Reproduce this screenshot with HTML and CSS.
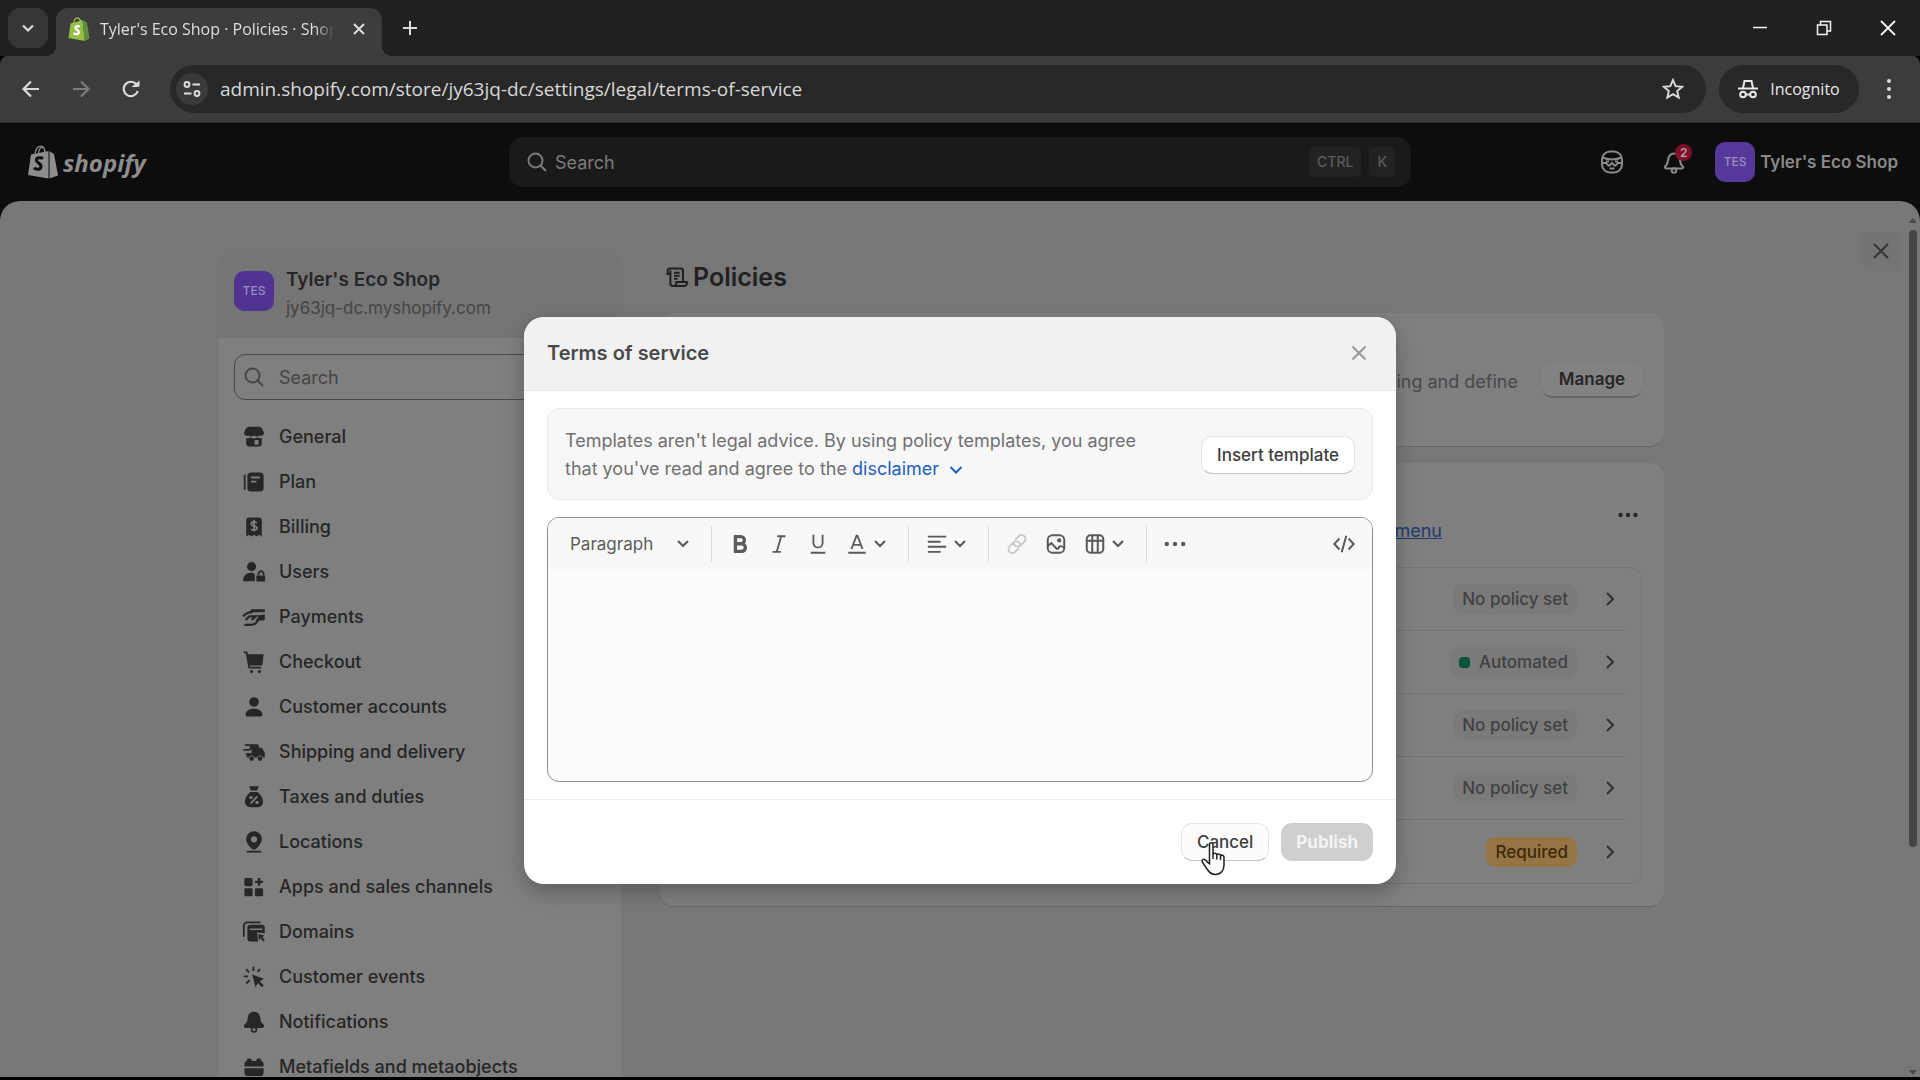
FILE: index.html
```html
<!DOCTYPE html>
<html lang="en">
<head>
<meta charset="utf-8">
<meta name="viewport" content="width=device-width, initial-scale=1">
<title>Tyler's Eco Shop · Policies · Shopify</title>
<link rel="stylesheet" href="styles.css">
</head>
<body>
<div class="browser">
  <div class="tabstrip">
    <button class="tab-search" aria-label="Search tabs"><svg width="14" height="14" viewBox="0 0 14 14" fill="none" stroke="currentColor" stroke-width="2.2"><path d="M2 4.5l5 5 5-5"/></svg></button>
    <div class="tab">
      <svg width="22" height="24" viewBox="0 0 22 24"><path d="M2.500 6.500L14.500 3l2.500 21L0.500 21z" fill="#95bf47"/><path d="M14.500 3l4.500 2.500 2.500 16L16.500 24z" fill="#5e8e3e"/><path d="M5.500 6.500c.5-3.500 2-5.500 4-5.500 1.700 0 2.700 1.500 3 4" fill="none" stroke="#95bf47" stroke-width="1.300"/><path d="M11.800 9.700c-1.500-.9-4.400-1-4.400 1.100 0 2 3.800 2.100 3.400 4.700-.3 2.200-3.300 2.100-5.200.7" fill="none" stroke="#fff" stroke-width="2.300"/></svg>
      <span class="tab-title">Tyler's Eco Shop · Policies · Shopify</span>
      <button class="tab-close" aria-label="Close tab"><svg width="14" height="14" viewBox="0 0 14 14" fill="none" stroke="currentColor" stroke-width="2"><path d="M2 2l10 10M12 2L2 12"/></svg></button>
    </div>
    <button class="tab-new" aria-label="New tab"><svg width="16" height="16" viewBox="0 0 16 16" fill="none" stroke="currentColor" stroke-width="2"><path d="M8 1v14M1 8h14"/></svg></button>
    <div class="window-controls">
      <button aria-label="Minimize"><svg width="16" height="16" viewBox="0 0 16 16" fill="none" stroke="currentColor" stroke-width="1.500"><path d="M1 7.500h14"/></svg></button>
      <button aria-label="Restore"><svg width="16" height="16" viewBox="0 0 16 16" fill="none" stroke="currentColor" stroke-width="1.500"><path d="M1.500 5h9.500v9.500H1.500zM4.500 5V1.500h10V11H11"/></svg></button>
      <button aria-label="Close window"><svg width="16" height="16" viewBox="0 0 16 16" fill="none" stroke="currentColor" stroke-width="1.800"><path d="M1 1l14 14M15 1L1 15"/></svg></button>
    </div>
  </div>

  <div class="toolbar">
    <button class="nav-btn" aria-label="Back"><svg width="20" height="20" viewBox="0 0 20 20" fill="none" stroke="currentColor" stroke-width="2.200"><path d="M18 10H3M10 2.500L2.500 10l7.500 7.500"/></svg></button>
    <button class="nav-btn dim" aria-label="Forward"><svg width="20" height="20" viewBox="0 0 20 20" fill="none" stroke="currentColor" stroke-width="2.200"><path d="M2 10h15M10 2.500l7.500 7.500-7.500 7.500"/></svg></button>
    <button class="nav-btn" aria-label="Reload"><svg width="20" height="20" viewBox="0 0 20 20" fill="none" stroke="currentColor" stroke-width="2.200"><path d="M16.800 12a7.200 7.200 0 1 1-1.500-6.800"/><path d="M10.500 8h5.500l2.500-.5V1.500z" fill="currentColor" stroke="none"/></svg></button>
    <div class="address">
      <button class="site-info" aria-label="View site information"><svg width="20" height="20" viewBox="0 0 20 20" fill="none" stroke="currentColor" stroke-width="2"><circle cx="5" cy="5.500" r="2.400"/><path d="M10.500 5.500H18M2 14.500h7.500"/><circle cx="15" cy="14.500" r="2.400"/></svg></button>
      <input class="url" type="text" aria-label="Address" value="admin.shopify.com/store/jy63jq-dc/settings/legal/terms-of-service">
      <button class="star" aria-label="Bookmark this page"><svg width="22" height="22" viewBox="0 0 22 22" fill="none" stroke="currentColor" stroke-width="1.900"><path d="M11 2l2.600 6.100 6.600.6-5 4.400 1.500 6.500L11 16.200l-5.700 3.400 1.500-6.500-5-4.400 6.600-.6z"/></svg></button>
    </div>
    <button class="incognito"><svg width="20" height="20" viewBox="0 0 20 20" fill="none" stroke="currentColor" stroke-width="2"><path d="M0 9.500h20"/><path d="M5 9l1.500-7h7L15 9"/><circle cx="5" cy="15.500" r="2.800"/><circle cx="15" cy="15.500" r="2.800"/><path d="M7.800 15.500h4.400"/></svg>Incognito</button>
    <button class="kebab" aria-label="Browser menu"><svg width="6" height="22" viewBox="0 0 6 22" fill="currentColor"><circle cx="3" cy="3" r="2"/><circle cx="3" cy="11" r="2"/><circle cx="3" cy="19" r="2"/></svg></button>
  </div>

  <div class="page">
    <header class="topbar">
      <a class="logo" href="#"><svg width="30" height="34" viewBox="0 0 30 34"><path d="M3 9.500L20.500 6v27.500L0 30z" fill="currentColor"/><path d="M21.500 6.200L26 9l4 21.500-8.500 3z" fill="currentColor"/><path d="M7 9c.8-5 3-7.800 5.800-7.800 2.700 0 4 2.500 4.200 6.500M10.500 8C11 3.500 13 1.200 15.500 3" fill="none" stroke="currentColor" stroke-width="1.300"/><path d="M15 13.500c-2-1.300-6.600-1.200-6.600 1.700 0 3 5.200 3 4.600 6.800-.5 3.200-4.800 2.700-7 .9" fill="none" stroke="#0d0d0d" stroke-width="3"/></svg><span>shopify</span></a>
      <label class="top-search">
        <svg width="20" height="20" viewBox="0 0 20 20" fill="none" stroke="currentColor" stroke-width="1.900"><circle cx="8.500" cy="8.500" r="7"/><path d="M13.500 13.500L19 19"/></svg>
        <input type="search" placeholder="Search" aria-label="Search">
        <kbd>CTRL</kbd><kbd>K</kbd>
      </label>
      <div class="top-actions">
        <button class="top-icon" aria-label="Assistant"><svg width="24" height="24" viewBox="0 0 24 24" fill="none" stroke="currentColor" stroke-width="2"><rect x="2" y="1.500" width="20" height="21" rx="8"/><path d="M2.500 7.500c5 2.500 14 2.500 19 0M2 13h4l2.500 2.500h1L12 13l2.500 2.500h1L18 13h4M6 11.500h3M15 11.500h3M9.500 18.500h5"/></svg></button>
        <button class="top-icon" aria-label="Notifications"><svg width="24" height="24" viewBox="0 0 24 24" fill="none" stroke="currentColor" stroke-width="2"><path d="M3 16.500c1.500-1 2.500-3 3-6 .5-4.500 2.500-7 6-7s5.500 2.500 6 7c.5 3 1.500 5 3 6 .5 1.500-.5 2-1.500 2h-15c-1 0-2-.5-1.500-2z"/><circle cx="12" cy="20.500" r="2.300"/></svg><span class="count">2</span></button>
        <button class="account"><span class="avatar">TES</span>Tyler's Eco Shop</button>
      </div>
    </header>

    <main class="panel">
      <button class="panel-close" aria-label="Close settings"><svg width="16" height="16" viewBox="0 0 16 16" fill="none" stroke="currentColor" stroke-width="2"><path d="M1 1l14 14M15 1L1 15"/></svg></button>
      <div class="scrollbar"><i class="up"></i><i class="thumb"></i><i class="down"></i></div>
      <div class="columns">
        <aside class="sidebar">
          <div class="shop">
            <span class="avatar">TES</span>
            <div><div class="shop-name">Tyler's Eco Shop</div><div class="shop-domain">jy63jq-dc.myshopify.com</div></div>
          </div>
          <div class="menu">
            <label class="side-search"><svg width="20" height="20" viewBox="0 0 20 20" fill="none" stroke="currentColor" stroke-width="1.900"><circle cx="8.500" cy="8.500" r="7"/><path d="M13.500 13.500L19 19"/></svg><input type="search" placeholder="Search" aria-label="Search settings"></label>
            <nav class="side-nav">
              <a href="#"><svg viewBox="0 0 20 20"><path d="M6 1.500h8c2 0 3.500 2.500 4.200 4.800.6 2-1.700 3.500-3.400 2.400-1.400 1.200-3.300 1.200-4.800 0-1.500 1.200-3.400 1.200-4.800 0C3.500 9.800 1.200 8.300 1.800 6.300 2.500 4 4 1.500 6 1.500z"/><path fill-rule="evenodd" d="M3.500 10.800c1 .3 2.200.2 3.500-.3 2 .9 4 .9 6 0 1.300.5 2.500.6 3.500.3V15a3 3 0 0 1-3 3h-7a3 3 0 0 1-3-3zm7 1.800v3.800h3.300v-3.800z"/></svg>General</a>
              <a href="#"><svg viewBox="0 0 20 20"><path d="M1.500 4H3v12.500H1.500z"/><path fill-rule="evenodd" d="M7.500 2h7.500a3 3 0 0 1 3 3v10a3 3 0 0 1-3 3H7.500a3 3 0 0 1-3-3V5a3 3 0 0 1 3-3zM7.500 5.500V7H15V5.500zM7.500 9v1.500H12V9z"/></svg>Plan</a>
              <a href="#"><svg viewBox="0 0 20 20"><path fill-rule="evenodd" d="M6 2h8a2.500 2.500 0 0 1 2.500 2.500V18l-2.200-1.500L12.200 18 10 16.500 7.800 18l-2.100-1.500L3.500 18V4.500A2.500 2.500 0 0 1 6 2z"/><path d="M12.300 6.500c-1.500-1.300-4.600-1-4.600.9 0 2.200 4.800 1.200 4.800 3.500 0 2-3.400 2.200-5 .8M10 4v9.500" fill="none" stroke="#7f7f7f" stroke-width="1.400"/></svg>Billing</a>
              <a href="#"><svg viewBox="0 0 20 20"><circle cx="8" cy="5.500" r="3.800"/><path d="M1 17c0-4 2.800-6.300 6-6.300 1.400 0 2.600.4 3.600 1v6H2c-.6 0-1-.3-1-.7z"/><path d="M12 13h6.500a.8.800 0 0 1 .8.800V17a1 1 0 0 1-1 1H13a1 1 0 0 1-1-1z"/><path d="M13.500 12.500c.5-4 4.200-4 4.500-1v1.500" fill="none" stroke="currentColor" stroke-width="1.500"/></svg>Users</a>
              <a href="#"><svg viewBox="0 0 20 20"><path d="M8 3.500h11V6H6zM19 8v3.500c0 1-.5 1.500-1.500 1.500H11l2-2c1-2-.5-3-2-2z"/><path d="M1 9.500c2-3 4.500-3.500 8-3.500M3 12.500l3-3h5.500L8 12.500M2 16.500h5c4 0 5-1.500 7.500-5.500" fill="none" stroke="currentColor" stroke-width="1.800"/></svg>Payments</a>
              <a href="#"><svg viewBox="0 0 20 20"><path d="M4.300 3.500H18l-.8 7.500c-.2 1.300-1 2-2.200 2H6z"/><path d="M1.500 2h2.300L6 14.700h10" fill="none" stroke="currentColor" stroke-width="1.500"/><circle cx="8" cy="18" r="1.300"/><circle cx="14.500" cy="18" r="1.300"/></svg>Checkout</a>
              <a href="#"><svg viewBox="0 0 20 20"><circle cx="10" cy="5.800" r="4"/><path d="M3 16.500c.4-3.500 3-5 7-5s6.600 1.500 7 5c.1.900-.4 1.500-1.300 1.500H4.300c-.9 0-1.400-.6-1.300-1.500z"/></svg>Customer accounts</a>
              <a href="#"><svg viewBox="0 0 20 20"><path d="M7 3.500h5.500c1 0 1.500.6 1.500 1.500v1.500h2.500l2.500 4V14.500h-1.500a2.700 2.700 0 0 0-5 0h-2a2.700 2.700 0 0 0-5 0H4V11h4V8H6z"/><path d="M2.500 4.300H8M1 8.300h6M3 12h4" fill="none" stroke="currentColor" stroke-width="1.500"/><circle cx="8" cy="15.500" r="1.900"/><circle cx="15" cy="15.500" r="1.900"/></svg>Shipping and delivery</a>
              <a href="#"><svg viewBox="0 0 20 20"><path d="M6 1h8l-1.500 3.500h-5zM7 5.800h6c2.800 2.500 4.500 5 4.500 8 0 3-1.800 4.700-4.500 4.700H7c-2.700 0-4.500-1.700-4.500-4.700 0-3 1.700-5.500 4.500-8z"/><path d="M12.700 9.500l-5.500 6" fill="none" stroke="#7f7f7f" stroke-width="1.500"/><circle cx="7.500" cy="10.500" r="1.400" fill="#7f7f7f"/><circle cx="12.500" cy="14.500" r="1.400" fill="#7f7f7f"/></svg>Taxes and duties</a>
              <a href="#"><svg viewBox="0 0 20 20"><path fill-rule="evenodd" d="M10 1a6.500 6.500 0 0 1 6.500 6.500c0 3.500-2.500 6.200-5 8.300-.9.800-2.100.8-3 0-2.500-2.100-5-4.800-5-8.300A6.500 6.500 0 0 1 10 1zm0 4.200a2.600 2.600 0 1 0 0 5.200 2.600 2.600 0 0 0 0-5.200z"/><path d="M4 17.300h12v1.500H4z"/></svg>Locations</a>
              <a href="#"><svg viewBox="0 0 20 20"><rect x="2" y="2.500" width="6.800" height="6.800" rx="1.200"/><rect x="2" y="11" width="6.800" height="6.800" rx="1.200"/><rect x="10.800" y="11" width="6.800" height="6.800" rx="1.200"/><path d="M13.200 2.500h2v2.200h2.300v2h-2.300v2.200h-2V6.700h-2.300v-2h2.300z"/></svg>Apps and sales channels</a>
              <a href="#"><svg viewBox="0 0 20 20"><path d="M1.500 14V5a3 3 0 0 1 3-3h11" fill="none" stroke="currentColor" stroke-width="1.500"/><path fill-rule="evenodd" d="M7 4h9.500A2.500 2.500 0 0 1 19 6.500V11l-6.500-.5 1 7.500H7a2.500 2.500 0 0 1-2.500-2.500v-9A2.500 2.500 0 0 1 7 4zM6.500 7v1.300h10.500V7z"/><path d="M13.500 11.700l5.500 1.500-2 1 2 2.800-1.500 1-2-2.700-1.300 1.700z"/></svg>Domains</a>
              <a href="#"><svg viewBox="0 0 20 20"><path d="M8.500 8l9.800 3.500-3.500 2 3.300 3.500-1.600 1.500-3.300-3.500-2 3.500z"/><path d="M9.500 1.500v3.500M3.500 3.500l2.300 2.600M15 3.500l-2 2.300M1.500 9.500H5M6.300 12.700L3.500 15.500" fill="none" stroke="currentColor" stroke-width="1.500"/></svg>Customer events</a>
              <a href="#"><svg viewBox="0 0 20 20"><path d="M10 1.500c-3.400 0-5 2.200-5.300 5.500-.2 2.500-.9 3.800-2.500 4.800-1.200 1-.5 3.200 1 3.200h13.600c1.500 0 2.200-2.200 1-3.200-1.600-1-2.300-2.300-2.500-4.800C15 3.700 13.400 1.500 10 1.500z"/><circle cx="10" cy="16.300" r="2" fill="none" stroke="currentColor" stroke-width="1.500"/></svg>Notifications</a>
              <a href="#"><svg viewBox="0 0 20 20"><path d="M4 4c0-1.500 4-1.500 4 0v1h4V4c0-1.500 4-1.500 4 0v1c1.300.2 2 1.200 2 2.500v2H2v-2C2 6.200 2.700 5.200 4 5zM2 11h16v3.500a3 3 0 0 1-3 3H5a3 3 0 0 1-3-3z"/></svg>Metafields and metaobjects</a>
            </nav>
          </div>
        </aside>

        <section class="content">
          <h1><svg width="24" height="24" viewBox="0 0 20 20" fill="none" stroke="currentColor" stroke-width="1.700"><path d="M4.500 7.500H2.200V4.800A2 2 0 0 1 4.200 3H13a2 2 0 0 1 2 2v8.500M4.500 7.500V4.300M4.500 7.500v8a2 2 0 0 0 2 2H16c1.200 0 2.200-1 2.200-2.300v-1H9.500v1c0 1.300-1.300 2.300-2.600 2.300M7.500 6.500h4.700M7.500 9h4.700M7.500 11.500h3"/></svg>Policies</h1>
          <div class="card rules">
            <span class="muted">ing and define</span>
            <button class="btn-dim">Manage</button>
          </div>
          <div class="card policies">
            <div class="policies-head">
              <a class="menu-link" href="#">menu</a>
              <button class="more" aria-label="More actions"><svg width="20" height="6" viewBox="0 0 20 6" fill="currentColor"><circle cx="2.500" cy="3" r="2.200"/><circle cx="10" cy="3" r="2.200"/><circle cx="17.500" cy="3" r="2.200"/></svg></button>
            </div>
            <ul class="policy-list">
              <li><span class="badge">No policy set</span><svg class="chev" viewBox="0 0 10 16"><path d="M2 2l6 6-6 6"/></svg></li>
              <li><span class="badge"><i class="dot"></i>Automated</span><svg class="chev" viewBox="0 0 10 16"><path d="M2 2l6 6-6 6"/></svg></li>
              <li><span class="badge">No policy set</span><svg class="chev" viewBox="0 0 10 16"><path d="M2 2l6 6-6 6"/></svg></li>
              <li><span class="badge">No policy set</span><svg class="chev" viewBox="0 0 10 16"><path d="M2 2l6 6-6 6"/></svg></li>
              <li><span class="badge required">Required</span><svg class="chev" viewBox="0 0 10 16"><path d="M2 2l6 6-6 6"/></svg></li>
            </ul>
          </div>
        </section>
      </div>
    </main>

    <div class="overlay">
      <div class="dialog" role="dialog" aria-labelledby="dialog-title">
        <div class="dialog-head">
          <h2 id="dialog-title">Terms of service</h2>
          <button class="dialog-close" aria-label="Close"><svg width="16" height="16" viewBox="0 0 16 16" fill="none" stroke="currentColor" stroke-width="2"><path d="M1.500 1.500l13 13M14.500 1.500l-13 13"/></svg></button>
        </div>
        <div class="dialog-body">
          <div class="notice">
            <p>Templates aren't legal advice. By using policy templates, you agree that you've read and agree to the <a href="#">disclaimer<svg width="14" height="10" viewBox="0 0 14 10" fill="none" stroke="currentColor" stroke-width="2"><path d="M1.500 2L7 7.500 12.500 2"/></svg></a></p>
            <button class="btn">Insert template</button>
          </div>
          <div class="editor">
            <div class="editor-bar">
              <button class="format">Paragraph<svg class="caret" viewBox="0 0 14 10"><path d="M2 2l5 5 5-5"/></svg></button>
              <span class="sep"></span>
              <div class="group">
                <button class="tool" aria-label="Bold"><svg viewBox="0 0 24 24" fill="none" stroke="currentColor" stroke-width="3.600"><path d="M7 4h6a3.700 3.700 0 0 1 0 7.600H7zM7 11.800h6.800a4.100 4.100 0 0 1 0 8.200H7z"/></svg></button>
                <button class="tool" aria-label="Italic"><svg viewBox="0 0 24 24" fill="none" stroke="currentColor" stroke-width="2"><path d="M10 3.500h9M5 20.500h9M14.500 3.500l-5 17"/></svg></button>
                <button class="tool" aria-label="Underline"><svg viewBox="0 0 24 24" fill="none" stroke="currentColor" stroke-width="2"><path d="M7 2v8.500c0 7 10 7 10 0V2M4 21.500h16"/></svg></button>
                <button class="tool wide" aria-label="Text colour"><svg viewBox="0 0 24 24" fill="none" stroke="currentColor" stroke-width="2"><path d="M6 17.500L11.500 3h1L18 17.500M8 13h8M2.500 21.500h19"/></svg><svg class="caret" viewBox="0 0 14 10"><path d="M2 2l5 5 5-5"/></svg></button>
              </div>
              <span class="sep"></span>
              <button class="tool wide" aria-label="Alignment"><svg viewBox="0 0 24 24" fill="none" stroke="currentColor" stroke-width="2"><path d="M2 4h20M2 9.500h14M2 15h20M2 20.500h14"/></svg><svg class="caret" viewBox="0 0 14 10"><path d="M2 2l5 5 5-5"/></svg></button>
              <span class="sep"></span>
              <div class="group">
                <button class="tool off" aria-label="Link"><svg viewBox="0 0 24 24" fill="none" stroke="currentColor" stroke-width="2"><path d="M10 7.500l4-4c2-2 4.500-1.500 6 0s2 4 0 6l-4 4c-2 2-5 1.500-6.500 0s-1-3 0-4M14 16.500l-4 4c-2 2-4.500 1.500-6 0s-2-4 0-6l4-4c2-2 5-1.500 6.500 0s1 3 0 4"/></svg></button>
                <button class="tool" aria-label="Image"><svg viewBox="0 0 24 24" fill="none" stroke="currentColor" stroke-width="2.200"><rect x="3" y="2.500" width="18" height="19" rx="5"/><path d="M3 14l4-3 5 5.500c2.500 2 3-.5 3.500-1.500 1-1.500 3-.5 5.500 1"/><circle cx="15.500" cy="8" r="1.300" fill="currentColor"/></svg></button>
                <button class="tool wide" aria-label="Table"><svg viewBox="0 0 24 24" fill="none" stroke="currentColor" stroke-width="2.200"><rect x="3" y="2.500" width="18" height="19" rx="4"/><path d="M3 8.500h18M9 2.500v19M15 2.500v19"/></svg><svg class="caret" viewBox="0 0 14 10"><path d="M2 2l5 5 5-5"/></svg></button>
              </div>
              <span class="sep"></span>
              <button class="tool" aria-label="More"><svg viewBox="0 0 24 24" fill="currentColor"><circle cx="3" cy="12" r="2.400"/><circle cx="12" cy="12" r="2.400"/><circle cx="21" cy="12" r="2.400"/></svg></button>
              <button class="tool code" aria-label="Show HTML"><svg viewBox="0 0 24 24" fill="none" stroke="currentColor" stroke-width="2.200"><path d="M7 6l-5.500 6L7 18M17 6l5.500 6L17 18M14.500 3l-5 18"/></svg></button>
            </div>
            <textarea aria-label="Policy text"></textarea>
          </div>
        </div>
        <div class="dialog-foot">
          <button class="btn cancel">Cancel<svg class="pointer" width="28" height="36" viewBox="0 0 28 36"><path d="M9.500 3.500c0-2.400 3.500-2.400 3.500 0V13c.5-1.300 3.500-1.200 3.800.8.600-1.200 3.400-1 3.700.9.800-1 3.500-.7 3.500 1.800V24c0 5.500-3.200 9.500-8.500 9.500-4.500 0-6.500-2.200-8.500-5.500L2.300 21c-1-2 1.300-3.600 3-2l4.200 4z" fill="#fff" stroke="#222" stroke-width="1.500" stroke-linejoin="round"/><path d="M13 13v5M16.800 14v4.500M20.500 15v4" stroke="#222" stroke-width="1.500"/></svg></button>
          <button class="publish" disabled>Publish</button>
        </div>
      </div>
    </div>
  </div>
</div>
</body>
</html>
```
FILE: styles.css
```css
* { box-sizing: border-box; }
body { margin: 0; background: #000; font-family: Inter, "Liberation Sans", sans-serif; font-size: 17px; }
button, input, textarea { font: inherit; color: inherit; border: 0; background: none; padding: 0; margin: 0; outline: 0; }
button { display: flex; align-items: center; justify-content: center; flex: none; }
svg { flex: none; display: block; }
a { text-decoration: none; color: inherit; }
i { display: block; }

.browser { height: 100vh; display: flex; flex-direction: column; padding-bottom: 3px; overflow: hidden; }

/* Browser chrome */
.tabstrip, .toolbar { font-family: "Open Sans", "Noto Sans", sans-serif; display: flex; align-items: center; flex: none; color: #dcdcdc; }
.tabstrip { height: 56px; background: #202020; padding-left: 8px; }
.tab-search { width: 40px; height: 40px; border-radius: 12px; background: #363636; }
.tab { position: relative; display: flex; align-items: center; gap: 10px; align-self: flex-end; width: 326px; height: 48px; margin-left: 8px; padding: 0 16px 6px 12px; border-radius: 12px 12px 0 0; background: #3c3c3c; }
.tab::before, .tab::after { content: ""; position: absolute; bottom: 0; width: 10px; height: 10px; }
.tab::before { left: -10px; background: radial-gradient(circle at 0 0, transparent 10px, #3c3c3c 10px); }
.tab::after { right: -10px; background: radial-gradient(circle at 100% 0, transparent 10px, #3c3c3c 10px); }
.tab-title { flex: 1; overflow: hidden; white-space: nowrap; font-size: 16px; color: #dedede; mask-image: linear-gradient(to right, #000 92%, transparent); }
.tab-close { width: 14px; margin-left: 8px; }
.tab-new { width: 40px; height: 40px; margin-left: 8px; }
.window-controls { display: flex; margin-left: auto; color: #f2f2f2; }
.window-controls button { width: 64px; height: 56px; }
.toolbar { height: 67px; background: #3c3c3c; padding: 0 13px 0 6px; border-bottom: 1px solid #2c2c2c; border-radius: 8px 8px 0 0; box-shadow: 0 -8px 0 -4px #202020; }
.nav-btn { width: 50px; height: 48px; }
.dim { color: #7c7c7c; }
.address { flex: 1; display: flex; align-items: center; height: 48px; margin-left: 14px; padding: 0 22px 0 6px; border-radius: 24px; background: #282828; }
.site-info { width: 32px; height: 32px; border-radius: 16px; background: #3a3a3a; }
.url { flex: 1; min-width: 0; margin-left: 12px; font-size: 19px; color: #d8d8d8; }
.incognito { gap: 12px; height: 48px; width: 140px; margin-left: 13px; border-radius: 24px; background: #282828; font-size: 16px; color: #e8e8e8; }
.kebab { width: 36px; height: 48px; margin-left: 12px; }

/* Admin top bar */
.page { position: relative; flex: 1; min-height: 0; display: flex; flex-direction: column; background: #0d0d0d; }
.topbar { flex: none; height: 78px; display: grid; grid-template-columns: 1fr 902px 1fr; align-items: center; padding: 0 22px; color: #8a8a8a; }
.logo { display: flex; align-items: center; gap: 5px; padding-left: 6px; font: italic 700 24px "Open Sans", sans-serif; color: #8d8d8d; }
.top-search { display: flex; align-items: center; gap: 8px; height: 50px; padding: 0 16px 0 18px; border-radius: 14px; background: #1a1a1a; color: #7c7c7c; }
.top-search input { flex: 1; min-width: 0; font-size: 18px; }
input::placeholder { color: inherit; opacity: 1; }
kbd { font: 500 14px Inter, sans-serif; line-height: 30px; padding: 0 8px; border-radius: 6px; background: #222; color: #5c5c5c; }
.top-actions { display: flex; justify-content: flex-end; align-items: center; }
.top-icon { position: relative; width: 24px; height: 40px; margin-right: 38px; }
.top-icon + .top-icon { margin-right: 29px; }
.count { position: absolute; top: 2px; right: -6px; width: 17px; height: 17px; border-radius: 9px; background: #7d1029; color: #b9a0a6; font-size: 12px; line-height: 17px; font-weight: 600; text-align: center; }
.avatar { flex: none; width: 40px; height: 40px; border-radius: 10px; background: #4f3391; color: #9c8bc4; font-size: 12px; font-weight: 500; line-height: 40px; text-align: center; }
.account { gap: 5px; font-weight: 600; }
.account .avatar { background: #55399a; }

/* Settings panel */
.panel { position: relative; flex: 1; min-height: 0; overflow: hidden; padding: 48px 38px 0 0; border-radius: 20px 20px 0 0; background: #777; color: #262626; }
.panel-close { position: absolute; top: 30px; right: 19px; width: 40px; height: 40px; border-radius: 10px; background: #747474; color: #333; }
.scrollbar { position: absolute; top: 17px; right: 3px; bottom: 2px; width: 9px; display: flex; flex-direction: column; align-items: center; }
.up, .down { border: 4px solid transparent; }
.up { border-top: 0; border-bottom: 5px solid #484848; margin-bottom: 7px; }
.down { border-bottom: 0; border-top: 5px solid #484848; margin-top: auto; }
.thumb { width: 8px; height: 72%; border-radius: 4px; background: #464646; }
.columns { display: grid; grid-template-columns: 404px minmax(0, 1fr); gap: 38px; max-width: 1446px; margin: 0 auto; }
.sidebar { border-radius: 14px 14px 0 0; background: #757575; }
.shop { display: flex; align-items: flex-start; gap: 12px; height: 89px; padding: 17px 16px 0; }
.shop .avatar { margin-top: 5px; }
.shop-name { font-size: 19px; font-weight: 600; line-height: 28px; }
.shop-domain { font-size: 17px; line-height: 28px; color: #444; }
.menu { padding: 16px 15px 0; background: #7f7f7f; border: 1px solid #7b7b7b; border-width: 0 1px; }
.side-search { display: flex; align-items: center; gap: 15px; height: 46px; padding: 0 9px; border: 1px solid #4a4a4a; border-radius: 11px; color: #454545; }
.side-search input { flex: 1; min-width: 0; font-size: 18px; }
.side-nav { display: flex; flex-direction: column; padding: 14px 8px 0; }
.side-nav a { display: flex; align-items: center; gap: 13px; height: 45px; font-size: 18px; font-weight: 500; white-space: nowrap; }
.side-nav svg { width: 24px; height: 24px; fill: currentColor; }
h1 { display: flex; align-items: center; gap: 4px; height: 32px; margin: 12px 0 20px 5px; font-size: 25px; font-weight: 600; color: #202020; }
.card { border-radius: 14px; background: #7f7f7f; border-bottom: 1px solid #686868; }
.rules { display: flex; align-items: flex-start; justify-content: flex-end; gap: 24px; height: 134px; padding: 49px 22px 0; }
.muted { font-size: 18px; line-height: 40px; color: #484848; }
.btn-dim { width: 100px; height: 36px; border-radius: 10px; background: #828282; border-bottom: 2px solid #666; font-weight: 600; font-size: 17px; }
.policies { margin-top: 16px; padding: 0 22px 22px; }
.policies-head { display: flex; justify-content: flex-end; height: 104px; padding-top: 42px; }
.menu-link { font-size: 18px; line-height: 52px; color: #1f3a6c; text-decoration: underline; }
.more { width: 28px; height: 20px; margin-left: 172px; }
.policy-list { list-style: none; margin: 0; padding: 0; border: 1px solid #747474; border-radius: 12px; }
.policy-list li { display: flex; align-items: center; justify-content: flex-end; gap: 28px; height: 63px; margin: 0 16px; padding-right: 10px; border-bottom: 1px solid #727272; }
.policy-list li:last-child { border-bottom: 0; }
.badge { display: flex; align-items: center; gap: 9px; height: 30px; padding: 0 9px; border-radius: 9px; background: #7a7a7a; color: #414141; font-size: 17px; font-weight: 500; }
.dot { width: 11px; height: 11px; border-radius: 4px; background: #0a5339; }
.required { background: #967544; color: #3d280b; }
.chev { width: 10px; height: 16px; fill: none; stroke: #303030; stroke-width: 2; }

/* Terms of service dialog */
.overlay { position: absolute; inset: 0; display: flex; align-items: center; justify-content: center; }
.dialog { width: 100%; max-width: 872px; border-radius: 20px; overflow: hidden; background: #fff; color: #4a4a4a; box-shadow: 0 8px 20px rgba(0, 0, 0, .25); }
.dialog-head { display: flex; align-items: center; justify-content: space-between; height: 74px; padding: 0 29px 0 23px; background: #f1f1f1; border-bottom: 1px solid #e6e6e6; }
h2 { margin: 0; font-size: 20px; font-weight: 600; }
.dialog-close { color: #999; }
.dialog-body { padding: 17px 23px; }
.notice { display: flex; align-items: center; justify-content: space-between; gap: 20px; padding: 18px 17px 16px; border: 1px solid #e9e9e9; border-radius: 12px; background: #f7f7f7; }
.notice p { margin: 0; max-width: 600px; font-size: 18px; line-height: 28px; color: #717171; }
.notice a { color: #1f5fbf; }
.notice a svg { display: inline-block; margin-left: 10px; }
.btn { height: 38px; padding: 0 15px; border: 1px solid #e6e6e6; border-bottom-color: #c4c4c4; border-radius: 11px; background: #fff; font-size: 17px; font-weight: 500; color: #3f3f3f; }
.editor { margin-top: 17px; border: 1px solid #8e8e8e; border-radius: 12px; overflow: hidden; background: #fcfcfc; }
.editor-bar { display: flex; align-items: center; height: 52px; padding: 0 17px 0 22px; background: #f8f8f8; }
.format { width: 120px; justify-content: space-between; font-size: 17px; color: #5c5c5c; }
.caret { fill: none; stroke: currentColor; stroke-width: 2.200; }
.editor-bar .caret { width: 14px; height: 10px; }
.sep { width: 1px; height: 36px; margin: 0 17px 0 21px; background: #dcdcdc; }
.group { display: flex; gap: 17px; }
.tool { gap: 5px; color: #5a5a5a; }
.tool svg { width: 22px; height: 22px; }
.off { color: #c8c8c8; }
.code { margin-left: auto; }
textarea { display: block; width: 100%; height: 211px; resize: none; }
.dialog-foot { display: flex; align-items: center; justify-content: flex-end; gap: 12px; height: 85px; padding: 0 23px; border-top: 1px solid #ececec; }
.cancel { position: relative; background: #fcfcfc; }
.pointer { position: absolute; left: 18px; top: 17px; }
.publish { height: 38px; padding: 0 15px; border-radius: 11px; background: #cfcfcf; color: #f4f4f4; font-size: 17px; font-weight: 700; }
```
